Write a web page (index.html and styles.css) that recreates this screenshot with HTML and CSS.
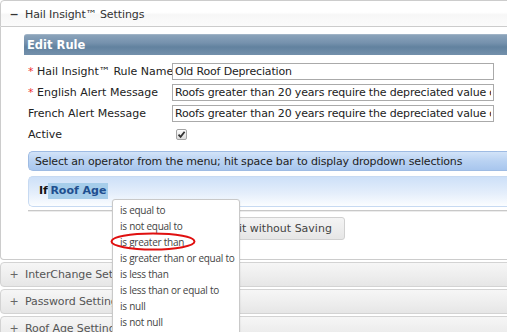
FILE: index.html
```html
<!DOCTYPE html>
<html>
<head>
<meta charset="utf-8">
<link rel="stylesheet" href="styles.css">
</head>
<body>
<div class="accordion">
  <div class="acc-head open"><span class="sign">&minus;</span>Hail Insight™ Settings</div>
  <div class="acc-body">
    <div class="edit-bar">Edit Rule</div>
    <div class="form">
      <label class="lbl"><span class="req">*</span> Hail Insight™ Rule Name</label>
      <input class="txt" type="text" value="Old Roof Depreciation">
      <label class="lbl"><span class="req">*</span> English Alert Message</label>
      <input class="txt" type="text" value="Roofs greater than 20 years require the depreciated value of the roof">
      <label class="lbl">French Alert Message</label>
      <input class="txt" type="text" value="Roofs greater than 20 years require the depreciated value of the roof">
      <label class="lbl">Active</label>
      <span class="check"><svg width="9" height="9" viewBox="0 0 9 9"><path d="M1.5 4.6 L3.6 6.8 L7.6 1.8" fill="none" stroke="#333" stroke-width="1.8"/></svg></span>
    </div>
    <div class="hint">Select an operator from the menu; hit space bar to display dropdown selections</div>
    <div class="rule">
      <b class="if">If</b> <span class="field">Roof Age</span>
      <ul class="menu">
        <li>is equal to</li>
        <li>is not equal to</li>
        <li>is greater than</li>
        <li>is greater than or equal to</li>
        <li>is less than</li>
        <li>is less than or equal to</li>
        <li>is null</li>
        <li>is not null</li>
        <svg class="circle" width="90" height="22" viewBox="0 0 90 22"><ellipse cx="44" cy="10.5" rx="41.5" ry="8" fill="none" stroke="#e01010" stroke-width="2"/></svg>
      </ul>
    </div>
    <div class="actions">
      <button class="btn">Save Rule</button>
      <button class="btn">Exit without Saving</button>
    </div>
  </div>
  <div class="acc-head"><span class="sign">+</span>InterChange Settings</div>
  <div class="acc-head"><span class="sign">+</span>Password Settings</div>
  <div class="acc-head"><span class="sign">+</span>Roof Age Settings</div>
</div>
</body>
</html>
```

FILE: styles.css
```css
html, body {
  margin: 0;
  padding: 0;
  background: #fff;
  overflow: hidden;
}
body {
  font-family: "DejaVu Sans", Verdana, sans-serif;
  font-size: 11px;
  color: #222;
}
.accordion {
  width: 540px;
}
.acc-head {
  line-height: 23px;
  border: 1px solid #d3d3d3;
  border-radius: 4px;
  background: linear-gradient(#f6f6f6, #ededed 60%, #e6e6e6);
  color: #555;
  margin-top: 2px;
  box-sizing: border-box;
  height: 25px;
  letter-spacing: -0.1px;
}
.acc-head.open {
  margin-top: 0;
  height: 27px;
  line-height: 27px;
  border-radius: 4px 4px 0 0;
  border-color: #ccc;
  background: linear-gradient(#fff, #fff 45%, #f7f7f7 55%, #fbfbfb);
  color: #333;
}
.sign {
  display: inline-block;
  width: 24px;
  text-align: center;
  padding-left: 2px;
  box-sizing: border-box;
}
.acc-head .sign { font-weight: normal; color: #666; }
.acc-head.open .sign { font-weight: bold; color: #333; }
.acc-body {
  border: 1px solid #ccc;
  border-top: none;
  border-radius: 0 0 4px 4px;
  padding: 7px 0 0 23px;
  height: 233px;
  box-sizing: border-box;
  position: relative;
}
.edit-bar {
  height: 21px;
  line-height: 21px;
  padding-left: 3px;
  color: #fff;
  font-weight: bold;
  font-size: 11.5px;
  border-radius: 3px 0 0 0;
  background: linear-gradient(#8aa3ba, #7591ad 40%, #62829f 60%, #7390ab);
  border-top: 1px solid #9fb3c6;
  box-sizing: border-box;
}
.form {
  display: grid;
  grid-template-columns: 144px 322px;
  grid-auto-rows: 17px;
  row-gap: 4px;
  margin: 8px 0 0 4px;
  align-items: center;
}
.lbl {
  white-space: nowrap;
  color: #222;
}
.req {
  color: #e33;
}
.txt {
  font: 11px "DejaVu Sans", Verdana, sans-serif;
  letter-spacing: -0.17px;
  color: #222;
  border: 1px solid #aaa;
  padding: 0 2px;
  margin: 0;
  height: 17px;
  box-sizing: border-box;
  width: 322px;
  background: #fff;
}
.check {
  margin: 0 0 0 4px;
  width: 11px;
  height: 11px;
  border: 1px solid #a5a5a5;
  border-radius: 2px;
  box-sizing: border-box;
  background: linear-gradient(#fcfcfc, #dcdcdc);
  display: flex;
  align-items: center;
  justify-content: center;
}
.check svg { display: block; }
.hint {
  margin: 8px 0 0 4px;
  height: 20px;
  line-height: 19px;
  padding-left: 6px;
  letter-spacing: -0.17px;
  border: 1px solid #9ebbe3;
  border-right: none;
  border-radius: 5px 0 0 5px;
  background: linear-gradient(#d2e3f8, #b9d2f2 50%, #a8c6ee);
  box-sizing: border-box;
  color: #222;
}
.rule {
  margin: 5px 0 0 4px;
  height: 31px;
  border: 1px solid #c7daf2;
  border-right: none;
  border-radius: 5px 0 0 5px;
  background: linear-gradient(#cde0f8, #e4eefb 55%, #fbfdff);
  box-sizing: border-box;
  padding: 6px 0 0 10px;
  position: relative;
}
.if {
  font-weight: bold;
  color: #111;
}
.field {
  display: inline-block;
  font-weight: bold;
  color: #1f4f8f;
  background: #a6cdea;
  padding: 0 2px;
  line-height: 16px;
  margin-left: -3px;
}
.menu {
  position: absolute;
  left: 83px;
  top: 22px;
  width: 128px;
  height: 140px;
  margin: 0;
  padding: 2px 0 0 0;
  list-style: none;
  background: #fff;
  border: 1px solid #c9c9c9;
  border-radius: 3px;
  box-shadow: 0 1px 2px rgba(0,0,0,0.12);
  box-sizing: border-box;
  z-index: 5;
  font-family: "Open Sans", "Segoe UI", sans-serif;
  font-size: 10px;
  letter-spacing: -0.25px;
  color: #444;
}
.menu li {
  height: 16px;
  line-height: 16px;
  padding-left: 7px;
  white-space: nowrap;
}
.circle {
  position: absolute;
  left: -4px;
  top: 31px;
}
.actions {
  margin: 3px 0 0 4px;
  border-top: 1px solid #c8c8c8;
  box-shadow: inset 0 1px 0 #ececec;
  padding: 6px 0 0 98px;
  display: flex;
  gap: 6px;
}
.btn {
  font: 11px "DejaVu Sans", Verdana, sans-serif;
  color: #444;
  height: 23px;
  padding: 0 12px;
  border: 1px solid #d0d0d0;
  border-radius: 3px;
  background: linear-gradient(#f4f4f4, #e6e6e6);
  margin: 0;
}
```
